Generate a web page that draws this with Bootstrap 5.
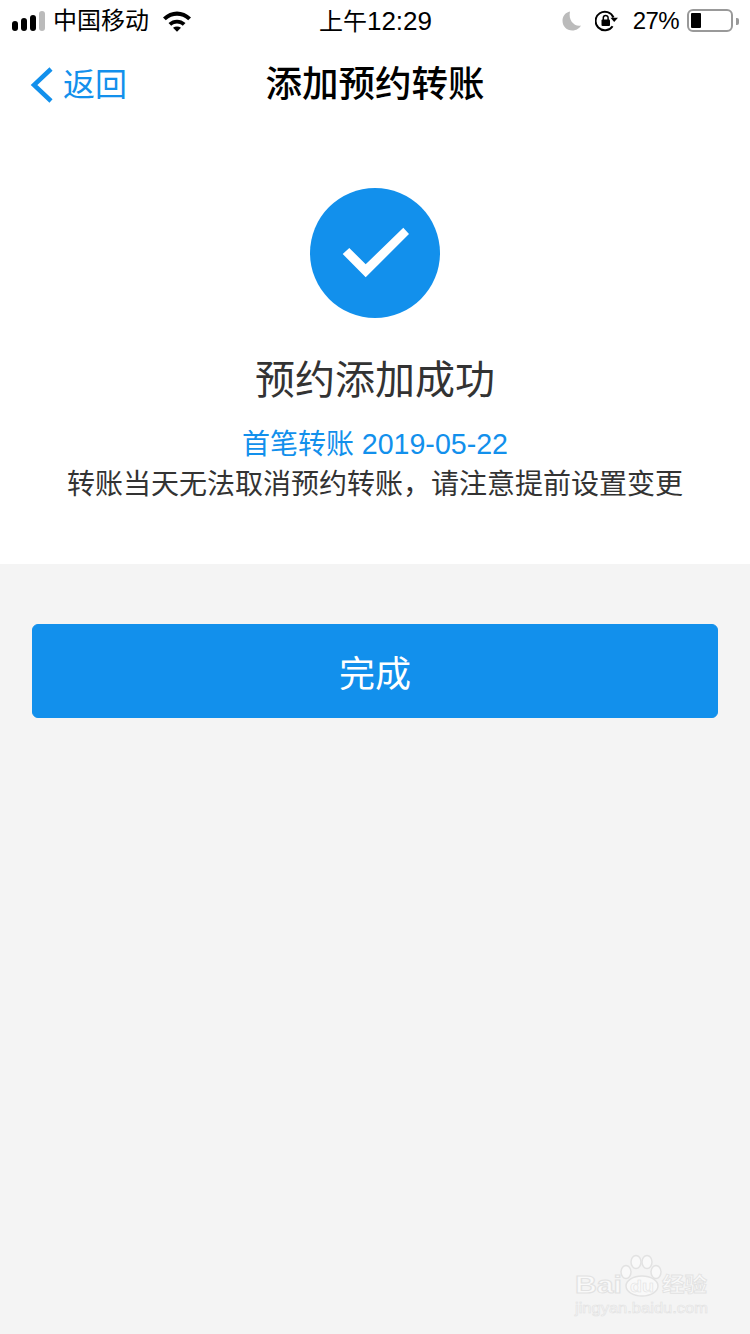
<!DOCTYPE html>
<html lang="zh-CN">
<head>
  <meta charset="UTF-8">
  <meta name="viewport" content="width=device-width, initial-scale=1.0">
  <title>添加预约转账</title>
  <link href="https://cdn.jsdelivr.net/npm/bootstrap@5.3.0/dist/css/bootstrap.min.css" rel="stylesheet">
  <style>
    body {
      width: 750px;
      height: 1334px;
      overflow: hidden;
      background: #f4f4f4;
      font-family: "Liberation Sans", "Noto Sans CJK SC", sans-serif;
      color: #333;
    }
    .page-box { height: 1334px; position: relative; }
    .status-bar { height: 40px; padding: 2px 11px 0 12px; color: #000; font-size: 24px; line-height: 38px; background: #fff; }
    .status-side { width: 290px; }
    .status-digits { font-size: 26px; }
    .signal-dots { gap: 3px; }
    .signal-dots i { display: block; width: 6px; border-radius: 3px; background: #000; }
    .signal-dots i:nth-child(1) { height: 10px; }
    .signal-dots i:nth-child(2) { height: 13px; }
    .signal-dots i:nth-child(3) { height: 16px; }
    .signal-dots i:nth-child(4) { height: 20px; background: #bbb; }
    .wifi-icon { margin-left: 14px; }
    .moon-icon { margin-right: 13px; }
    .lock-icon { margin-right: 15px; }
    .battery-pct { letter-spacing: -.6px; margin-right: 8px; }
    .battery-box { width: 46px; height: 23px; border: 2px solid #999; border-radius: 6px; padding: 2px; margin-top: -1px; }
    .battery-fill { width: 10px; height: 100%; background: #000; border-radius: 1px; }
    .battery-tip { width: 3px; height: 7px; margin-left: 3px; background: #999; border-radius: 0 2px 2px 0; }
    .nav-bar { height: 88px; position: relative; background: #fff; }
    .back-link { left: 28px; top: 24px; color: #1290ec; font-size: 32px; line-height: 42px; text-decoration: none; }
    .back-icon { margin-right: 10px; }
    .nav-title { font-size: 36.5px; font-weight: 500; color: #000; line-height: 90px; }
    .result-panel { height: 436px; padding-top: 60px; background: #fff; }
    .check-circle { width: 130px; height: 130px; border-radius: 50%; background: #1290ec; }
    .result-title { font-size: 40px; font-weight: 400; line-height: 56px; margin: 34px 0 0; color: #333; }
    .result-date { font-size: 28px; line-height: 40px; margin-top: 16px; color: #1290ec; }
    .date-digits { font-size: 28.6px; }
    .result-note { font-size: 28px; line-height: 40px; color: #333; }
    .done-btn { --bs-btn-bg: #1290ec; --bs-btn-border-color: #1290ec; --bs-btn-color: #fff; --bs-btn-hover-bg: #1290ec; --bs-btn-hover-color: #fff; height: 94px; padding-top: 14px; font-size: 36px; border-radius: 6px; margin: 60px 32px 0; width: 686px; }
    .watermark { left: 570px; top: 1250px; }
    .watermark text { fill: #f9f9f9; stroke: #e2e2e2; }
    .watermark .wm-fill { fill: #f9f9f9; stroke: #e2e2e2; stroke-width: 1.5; }
  </style>
</head>
<body>
  <div class="page-box">
    <div class="status-bar d-flex justify-content-between align-items-center">
      <div class="status-side d-flex align-items-center">
        <div class="signal-dots d-flex align-items-end"><i></i><i></i><i></i><i></i></div>
        <span class="ms-2">中国移动</span>
        <svg class="wifi-icon" width="28" height="22" viewBox="0 0 28 22"><path d="M0 7.500C8-.5 20-.5 28 7.500L25.200 10.200C18.500 4.300 9.500 4.300 2.800 10.200ZM5.500 13C10.500 8.500 17.500 8.500 22.500 13L19.800 15.700C16.200 12.700 11.800 12.700 8.200 15.700ZM10 17.800C12.400 16 15.600 16 18 17.800L14 21.800Z" fill="#000"/></svg>
      </div>
      <span>上午<span class="status-digits">12:29</span></span>
      <div class="status-side d-flex align-items-center justify-content-end">
        <svg class="moon-icon" width="20" height="20" viewBox="0 0 20 20"><path d="M8 .5C3.500 1.500.5 5 .5 9.700C.5 15.300 4.800 19.500 10.300 19.500C14.300 19.500 17.500 17.300 19 14.500C12.500 16 6 9.500 8 .5Z" fill="#bbb"/></svg>
        <svg class="lock-icon" width="23" height="22" viewBox="0 0 23 22"><path d="M17.600 16.200A9.300 9.300 0 1 1 18.500 7.500" fill="none" stroke="#000" stroke-width="2"/><path d="M15.500 7.800H23L19.200 12Z" fill="#000"/><rect x="6.500" y="9.500" width="8.500" height="6.500" rx="1" fill="#000"/><path d="M8.300 10V7.800a2.400 2.400 0 0 1 4.800 0V10" fill="none" stroke="#000" stroke-width="1.500"/></svg>
        <span class="battery-pct">27%</span>
        <div class="battery-box"><div class="battery-fill"></div></div>
        <div class="battery-tip"></div>
      </div>
    </div>

    <div class="nav-bar text-center">
      <a href="#" class="back-link position-absolute d-flex align-items-center">
        <svg class="back-icon" width="25" height="36" viewBox="0 0 25 36"><path d="M23 2L6 18L23 34" fill="none" stroke="#1290ec" stroke-width="4.500"/></svg>返回
      </a>
      <div class="nav-title">添加预约转账</div>
    </div>

    <div class="result-panel text-center">
      <div class="check-circle mx-auto">
        <svg class="d-block" width="130" height="130" viewBox="0 0 130 130"><polygon points="32.700,66 39.300,60 55.700,76.300 93.300,39.700 99,46 55.700,89.300" fill="#fff"/></svg>
      </div>
      <h1 class="result-title">预约添加成功</h1>
      <div class="result-date">首笔转账 <span class="date-digits">2019-05-22</span></div>
      <div class="result-note">转账当天无法取消预约转账，请注意提前设置变更</div>
    </div>

    <button type="button" class="btn done-btn d-block">完成</button>

    <svg class="watermark position-absolute" width="145" height="72" viewBox="0 0 145 72">
      <ellipse class="wm-fill" cx="66" cy="12" rx="5" ry="6.500"/>
      <ellipse class="wm-fill" cx="77" cy="12" rx="5" ry="6.500"/>
      <ellipse class="wm-fill" cx="56" cy="22" rx="5" ry="6.500"/>
      <ellipse class="wm-fill" cx="86" cy="22" rx="5" ry="6.500"/>
      <ellipse class="wm-fill" cx="72" cy="36" rx="16" ry="10"/>
      <text x="5" y="43" font-size="24" font-weight="700" textLength="47" lengthAdjust="spacingAndGlyphs">Bai</text>
      <text x="60" y="42" font-size="16" font-weight="700" stroke-width=".5" textLength="24" lengthAdjust="spacingAndGlyphs">du</text>
      <text x="92" y="42" font-size="20" font-weight="700" stroke-width=".8" textLength="45" lengthAdjust="spacingAndGlyphs">经验</text>
      <text x="5" y="63" font-size="15" stroke-width=".6" textLength="133" lengthAdjust="spacingAndGlyphs">jingyan.baidu.com</text>
    </svg>
  </div>
</body>
</html>
